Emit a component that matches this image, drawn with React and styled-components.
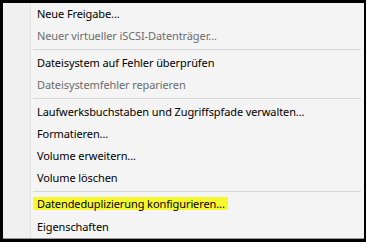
import React from "react";
import styled, { createGlobalStyle } from "styled-components";

const Global = createGlobalStyle`
  html, body { margin: 0; padding: 0; background: #000; }
  body { width: 366px; height: 242px; overflow: hidden; }
`;

const Frame = styled.div`
  width: 366px;
  height: 242px;
  box-sizing: border-box;
  background: #000;
  padding: 3px 2px 3px 3px;
  display: flex;
`;

const Menu = styled.ul`
  flex: 1;
  margin: 0;
  padding: 0;
  list-style: none;
  display: flex;
  flex-direction: column;
  border-bottom: 1px solid #9a9a9a;
  background: linear-gradient(
    to right,
    #f0f0f0 0,
    #f0f0f0 27px,
    #e3e3e3 27px,
    #e3e3e3 28px,
    #f4f4f4 28px
  );
  font-family: "Noto Sans", "Open Sans", sans-serif;
  font-size: 11px;
  letter-spacing: -0.1px;
`;

const Item = styled.li`
  height: 22px;
  line-height: 22px;
  padding-left: ${(p) => (p.$highlight ? 30 : 34)}px;
  color: ${(p) => (p.$disabled ? "#6d6d6d" : "#000")};
  white-space: nowrap;
`;

const Mark = styled.span`
  display: inline-block;
  height: 13px;
  line-height: 13px;
  vertical-align: 1px;
  padding: 0 3px 0 4px;
  background: #f7f72e;
`;

const Separator = styled.li`
  height: 1px;
  margin: 2px 3px 2px 30px;
  background: #d7d7d7;
`;

const items = [
  { label: "Neue Freigabe..." },
  { label: "Neuer virtueller iSCSI-Datenträger...", disabled: true },
  { sep: true },
  { label: "Dateisystem auf Fehler überprüfen" },
  { label: "Dateisystemfehler reparieren", disabled: true },
  { sep: true },
  { label: "Laufwerksbuchstaben und Zugriffspfade verwalten..." },
  { label: "Formatieren..." },
  { label: "Volume erweitern..." },
  { label: "Volume löschen" },
  { sep: true },
  { label: "Datendeduplizierung konfigurieren...", highlight: true },
  { label: "Eigenschaften" },
];

export default function App() {
  return (
    <>
      <Global />
      <Frame>
        <Menu>
          {items.map((it, i) =>
            it.sep ? (
              <Separator key={i} />
            ) : (
              <Item key={i} $disabled={it.disabled} $highlight={it.highlight}>
                {it.highlight ? <Mark>{it.label}</Mark> : it.label}
              </Item>
            )
          )}
        </Menu>
      </Frame>
    </>
  );
}
